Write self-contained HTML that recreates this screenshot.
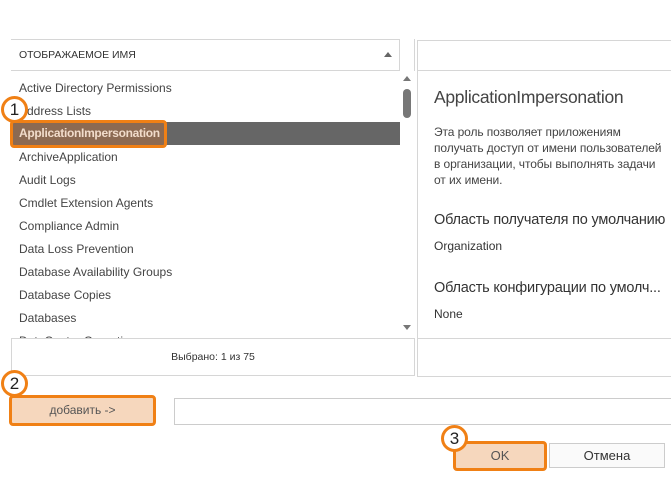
<!DOCTYPE html>
<html><head><meta charset="utf-8"><style>
*{box-sizing:border-box;margin:0;padding:0}
body{width:671px;height:500px;background:#fff;position:relative;overflow:hidden;font-family:"Liberation Sans",sans-serif;color:#333}
.a{position:absolute}
.row{position:absolute;left:19px;font-size:12px;color:#444;white-space:nowrap}
.circ{position:absolute;width:27px;height:27px;border:3px solid #f08015;border-radius:50%;background:#fff;font-size:17px;color:#222;text-align:center;line-height:21px}
.rt{position:absolute;left:434px;white-space:nowrap;color:#333}
</style></head><body>
<div class="a" style="left:11px;top:39px;width:389px;height:1px;background:#d6d6d6"></div>
<div class="a" style="left:11px;top:70px;width:389px;height:1px;background:#d6d6d6"></div>
<div class="a" style="left:399px;top:39px;width:1px;height:32px;background:#d6d6d6"></div>
<div class="a" style="left:414px;top:39px;width:1px;height:32px;background:#d6d6d6"></div>
<div class="a" style="left:19px;top:49px;font-size:10.5px;color:#333">ОТОБРАЖАЕМОЕ ИМЯ</div>
<div class="a" style="left:384px;top:52px;width:0;height:0;border-left:4px solid transparent;border-right:4px solid transparent;border-bottom:5px solid #666"></div>
<div class="a" style="left:11px;top:71px;width:404px;height:267px;overflow:hidden">
<div class="a" style="left:0;top:51px;width:389px;height:23px;background:#666"></div>
</div>
<div class="row" style="top:81px">Active Directory Permissions</div>
<div class="row" style="top:104px">Address Lists</div>
<div class="row" style="top:150px">ArchiveApplication</div>
<div class="row" style="top:173px">Audit Logs</div>
<div class="row" style="top:196px">Cmdlet Extension Agents</div>
<div class="row" style="top:219px">Compliance Admin</div>
<div class="row" style="top:242px">Data Loss Prevention</div>
<div class="row" style="top:265px">Database Availability Groups</div>
<div class="row" style="top:288px">Database Copies</div>
<div class="row" style="top:311px">Databases</div>
<div class="a" style="left:11px;top:333px;width:389px;height:5px;overflow:hidden"><div style="position:absolute;left:8px;top:1px;font-size:12px;color:#444">DataCenter Operations</div></div>
<div class="a" style="left:403px;top:76px;border-left:4px solid transparent;border-right:4px solid transparent;border-bottom:5px solid #777"></div>
<div class="a" style="left:403px;top:89px;width:8px;height:29px;border-radius:4px;background:#777"></div>
<div class="a" style="left:403px;top:325px;border-left:4px solid transparent;border-right:4px solid transparent;border-top:5px solid #777"></div>
<div class="a" style="left:10px;top:120px;width:157px;height:28px;border:3px solid #f08015;border-radius:4px;background:#8c6a52"></div>
<div class="a" style="left:19px;top:126px;font-size:12px;font-weight:bold;color:#f1dccb;letter-spacing:-0.3px">ApplicationImpersonation</div>
<div class="circ" style="left:1px;top:96px">1</div>
<div class="a" style="left:11px;top:338px;width:404px;height:38px;border:1px solid #d6d6d6;font-size:10.5px;text-align:center;line-height:36px;color:#333">Выбрано: 1 из 75</div>
<div class="a" style="left:417px;top:40px;width:260px;height:337px;border:1px solid #d6d6d6"></div>
<div class="a" style="left:417px;top:70px;width:260px;height:1px;background:#d6d6d6"></div>
<div class="a" style="left:417px;top:338px;width:260px;height:1px;background:#d6d6d6"></div>
<div class="rt" style="top:87px;font-size:17.5px;color:#444;letter-spacing:-0.3px">ApplicationImpersonation</div>
<div class="rt" style="top:124px;font-size:12px;line-height:16px;color:#444;letter-spacing:-0.1px">Эта роль позволяет приложениям<br>получать доступ от имени пользователей<br>в организации, чтобы выполнять задачи<br>от их имени.</div>
<div class="rt" style="top:212px;font-size:14.5px;letter-spacing:-0.2px">Область получателя по умолчанию</div>
<div class="rt" style="top:239px;font-size:12px">Organization</div>
<div class="rt" style="top:280px;font-size:14.5px;letter-spacing:-0.2px">Область конфигурации по умолч...</div>
<div class="rt" style="top:307px;font-size:12px">None</div>
<div class="a" style="left:174px;top:398px;width:500px;height:27px;border:1px solid #ccc"></div>
<div class="a" style="left:9px;top:395px;width:147px;height:31px;border:3px solid #f08015;border-radius:4px;background:#f6d7bd;font-size:12px;color:#555;text-align:center;line-height:25px">добавить -&gt;</div>
<div class="circ" style="left:1px;top:370px">2</div>
<div class="a" style="left:549px;top:443px;width:116px;height:25px;border:1px solid #ccc;background:#fafafa;font-size:13px;text-align:center;line-height:23px;color:#333">Отмена</div>
<div class="a" style="left:453px;top:441px;width:94px;height:30px;border:3px solid #f08015;border-radius:4px;background:#f6d7bd;font-size:13px;color:#555;text-align:center;line-height:24px">OK</div>
<div class="circ" style="left:441px;top:425px">3</div>
</body></html>
